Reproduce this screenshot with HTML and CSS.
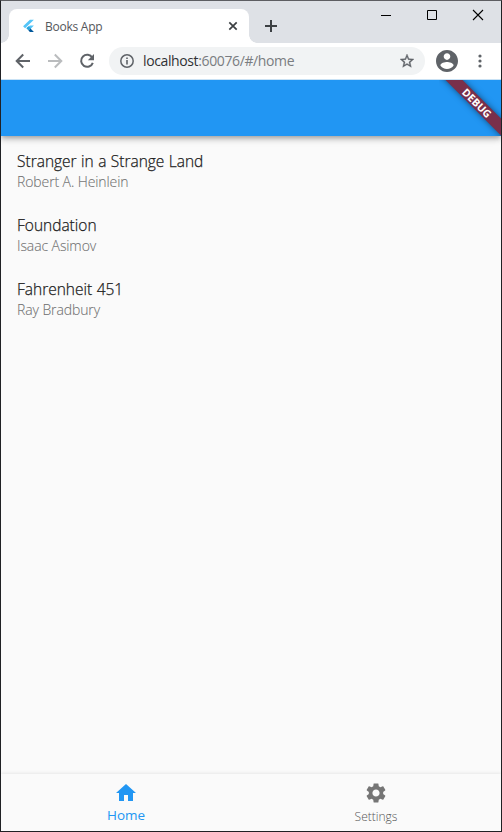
FILE: index.html
```
<!DOCTYPE html>
<html lang="en">
<head>
<meta charset="utf-8">
<title>Books App</title>
<link rel="stylesheet" href="styles.css">
</head>
<body>
<div class="window">
  <header class="titlebar">
    <div class="tab">
      <svg class="favicon" width="16" height="16" viewBox="0 0 16 16"><path fill="#54c5f8" d="M8.9 1.8h4L4.1 10.200 2.100 8.200zM8.900 7.600h4L9.500 10.900l-2.900.1-1.100-1.100z"/><path fill="#29a5dc" d="M5.400 10.300l2.100-2.100 2.200 2.100-2.200 2.200z"/><path fill="#01579b" d="M7.500 12.400l2-2 3.400 3.500h-4z"/></svg>
      <span class="tab-title">Books App</span>
      <svg class="tab-close" width="10" height="10" viewBox="0 0 10 10"><path d="M1.300 1.300l7.400 7.400M8.700 1.300L1.300 8.700" stroke="#3c4043" stroke-width="1.700"/></svg>
    </div>
    <svg class="new-tab" width="12" height="12" viewBox="0 0 12 12"><path d="M6 0v12M0 6h12" stroke="#3c4043" stroke-width="2"/></svg>
    <div class="controls">
      <svg width="12" height="12" viewBox="0 0 12 12"><path d="M1 6.500h10" stroke="#000"/></svg>
      <svg width="12" height="12" viewBox="0 0 12 12"><path d="M1.500 1.500h9v9h-9z" fill="none" stroke="#000"/></svg>
      <svg width="12" height="12" viewBox="0 0 12 12"><path d="M1 1l10 10M11 1L1 11" stroke="#000" stroke-width="1.100"/></svg>
    </div>
  </header>
  <div class="toolbar">
    <svg class="nav-icon" viewBox="0 0 16 16"><path d="M15 8H2M8.200 1.500L1.700 8l6.500 6.500" fill="none" stroke="#5f6368" stroke-width="2"/></svg>
    <svg class="nav-icon" viewBox="0 0 16 16"><path d="M1 8h13M7.800 1.500L14.300 8l-6.500 6.500" fill="none" stroke="#babcbe" stroke-width="2"/></svg>
    <svg class="nav-icon" viewBox="0 0 16 16"><path d="M13.300 4.700A6 6 0 1 0 13.800 9.800" fill="none" stroke="#5f6368" stroke-width="2"/><path d="M15 1v6.200H8.800z" fill="#5f6368"/></svg>
    <div class="address">
      <svg width="14" height="14" viewBox="0 0 14 14"><circle cx="7" cy="7" r="6.200" fill="none" stroke="#5f6368" stroke-width="1.500"/><path d="M7 6v4.500M7 3.400v1.700" stroke="#5f6368" stroke-width="1.600"/></svg>
      <span class="url">localhost<span class="path">:60076/#/home</span></span>
      <svg class="star" width="14" height="14" viewBox="2 2 20 20"><path fill="#5f6368" stroke="#5f6368" stroke-width=".5" d="M22 9.240l-7.190-.62L12 2 9.190 8.630 2 9.240l5.460 4.730L5.820 21 12 17.270 18.180 21l-1.630-7.030L22 9.240zM12 15.400l-3.760 2.270 1-4.280-3.320-2.880 4.380-.38L12 6.100l1.710 4.040 4.380.38-3.320 2.880 1 4.280L12 15.400z"/></svg>
    </div>
    <svg class="avatar" width="22" height="22" viewBox="2 2 20 20"><path fill="#5f6368" d="M12 2C6.480 2 2 6.480 2 12s4.480 10 10 10 10-4.480 10-10S17.520 2 12 2zm0 3c1.660 0 3 1.340 3 3s-1.340 3-3 3-3-1.340-3-3 1.340-3 3-3zm0 14.200c-2.500 0-4.710-1.280-6-3.220.03-1.990 4-3.080 6-3.080 1.990 0 5.970 1.090 6 3.080-1.290 1.940-3.500 3.220-6 3.220z"/></svg>
    <svg class="more" width="4" height="14" viewBox="0 0 4 14"><g fill="#5f6368"><circle cx="2" cy="2" r="1.600"/><circle cx="2" cy="7" r="1.600"/><circle cx="2" cy="12" r="1.600"/></g></svg>
  </div>
  <div class="appbar"><div class="debug"><span>DEBUG</span></div></div>
  <main class="books">
    <article class="book"><div class="title">Stranger in a Strange Land</div><div class="author">Robert A. Heinlein</div></article>
    <article class="book"><div class="title">Foundation</div><div class="author">Isaac Asimov</div></article>
    <article class="book"><div class="title">Fahrenheit 451</div><div class="author">Ray Bradbury</div></article>
  </main>
  <nav class="bottom-nav">
    <div class="item active">
      <svg width="24" height="24" viewBox="0 0 24 24"><path fill="#2196f3" d="M10 20v-6h4v6h5v-8h3L12 3 2 12h3v8z"/></svg>
      <span>Home</span>
    </div>
    <div class="item">
      <svg width="24" height="24" viewBox="0 0 24 24"><path fill="#757575" d="M19.140 12.940c.04-.3.060-.61.060-.94 0-.32-.02-.64-.07-.94l2.030-1.580c.18-.14.23-.41.12-.61l-1.920-3.320c-.12-.22-.37-.29-.59-.22l-2.390.96c-.5-.38-1.030-.7-1.620-.94l-.36-2.540c-.04-.24-.24-.41-.48-.41h-3.840c-.24 0-.43.17-.47.41l-.36 2.540c-.59.24-1.130.57-1.620.94l-2.390-.96c-.22-.08-.47 0-.59.22L2.740 8.870c-.12.21-.08.470.12.610l2.030 1.580c-.05.3-.09.63-.09.94s.02.640.070.940l-2.030 1.580c-.18.14-.23.410-.12.610l1.920 3.320c.12.22.37.290.590.220l2.390-.96c.5.380 1.030.7 1.620.940l.360 2.540c.05.24.24.410.480.410h3.840c.24 0 .44-.17.470-.41l.360-2.540c.59-.24 1.130-.56 1.620-.94l2.390.960c.22.080.470 0 .590-.22l1.920-3.320c.12-.22.070-.47-.12-.61l-2.010-1.580zM12 15.600c-1.980 0-3.600-1.620-3.600-3.600s1.620-3.600 3.600-3.600 3.600 1.620 3.600 3.600-1.620 3.600-3.600 3.600z"/></svg>
      <span>Settings</span>
    </div>
  </nav>
</div>
</body>
</html>
```
FILE: styles.css
```
* { box-sizing: border-box; }
body {
  margin: 0;
  font-family: "Open Sans", "Noto Sans", sans-serif;
}
svg { display: block; flex: none; }
.window {
  width: 502px;
  height: 832px;
  display: flex;
  flex-direction: column;
  border: 1px solid #202124;
  border-top-color: #5d5e62;
  background: #fafafa;
  overflow: hidden;
}
.titlebar {
  height: 42px;
  flex: none;
  display: flex;
  padding: 8px 0 0 8px;
  background: #dee1e6;
}
.tab {
  position: relative;
  width: 240px;
  height: 34px;
  display: flex;
  align-items: center;
  padding: 0 11px 0 12px;
  border-radius: 8px 8px 0 0;
  background: #fff;
}
.tab::before, .tab::after {
  content: "";
  position: absolute;
  bottom: 0;
  width: 8px;
  height: 8px;
}
.tab::before { left: -8px; background: radial-gradient(circle at 0 0, transparent 7.5px, #fff 8px); }
.tab::after { right: -8px; background: radial-gradient(circle at 100% 0, transparent 7.5px, #fff 8px); }
.tab-title {
  margin-left: 8px;
  font-size: 12px;
  letter-spacing: -0.25px;
  color: #54575b;
  white-space: nowrap;
}
.tab-close { margin-left: auto; }
.new-tab { margin: 11px 0 0 16px; }
.controls {
  display: flex;
  gap: 34px;
  margin-left: auto;
  padding-right: 17px;
}
.toolbar {
  height: 37px;
  flex: none;
  display: flex;
  align-items: center;
  padding: 0 19px 1px 14px;
  background: #fff;
  border-bottom: 1px solid #c9e2f5;
}
.nav-icon { width: 16px; height: 16px; margin-right: 16px; }
.address {
  width: 316px;
  height: 28px;
  display: flex;
  align-items: center;
  margin-left: -2px;
  padding: 0 11px;
  border-radius: 14px;
  background: #f1f3f4;
}
.url {
  margin-left: 9px;
  font-size: 14px;
  letter-spacing: -0.38px;
  color: #303134;
  white-space: nowrap;
}
.path { color: #7a7d81; }
.star { margin-left: auto; }
.avatar { margin-left: 11px; }
.more { margin-left: auto; }
.appbar {
  position: relative;
  z-index: 1;
  height: 56px;
  flex: none;
  background: #2196f3;
  box-shadow: 0 2px 4px -1px rgba(0,0,0,.2), 0 4px 5px rgba(0,0,0,.14), 0 1px 10px rgba(0,0,0,.12);
  clip-path: inset(0 0 -16px 0);
}
.debug {
  position: absolute;
  top: 0;
  right: 0;
  width: 62px;
  height: 56px;
  overflow: hidden;
}
.debug span {
  position: absolute;
  left: -12px;
  top: 17px;
  width: 100px;
  height: 12px;
  transform: rotate(45deg);
  background: #792f4b;
  box-shadow: 0 0 6px rgba(0,0,0,.5);
  color: #fff;
  font-size: 10.5px;
  font-weight: 700;
  line-height: 12px;
  text-align: center;
}
.books { flex: 1; padding-top: 8px; }
.book { height: 64px; padding: 7px 16px 0; }
.title {
  font-size: 15.5px;
  line-height: 21px;
  letter-spacing: 0;
  word-spacing: 0.4px;
  font-weight: 300;
  -webkit-text-stroke: 0.25px #212121;
  color: #212121;
  white-space: nowrap;
}
.author {
  font-size: 14px;
  line-height: 19px;
  font-weight: 300;
  letter-spacing: -0.1px;
  -webkit-text-stroke: 0.1px #777;
  color: #707070;
  white-space: nowrap;
}
.bottom-nav {
  height: 57px;
  flex: none;
  display: flex;
  background: #fafafa;
  box-shadow: 0 -1px 3px rgba(0,0,0,.08);
}
.item {
  flex: 1;
  display: flex;
  flex-direction: column;
  align-items: center;
  padding-top: 7px;
  font-size: 12px;
  line-height: 16px;
  font-weight: 300;
  color: #555;
}
.item span { margin-top: 4px; }
.active { font-size: 13.500px; font-weight: 400; color: #2196f3; }
.active span { margin-top: 2px; }
```
